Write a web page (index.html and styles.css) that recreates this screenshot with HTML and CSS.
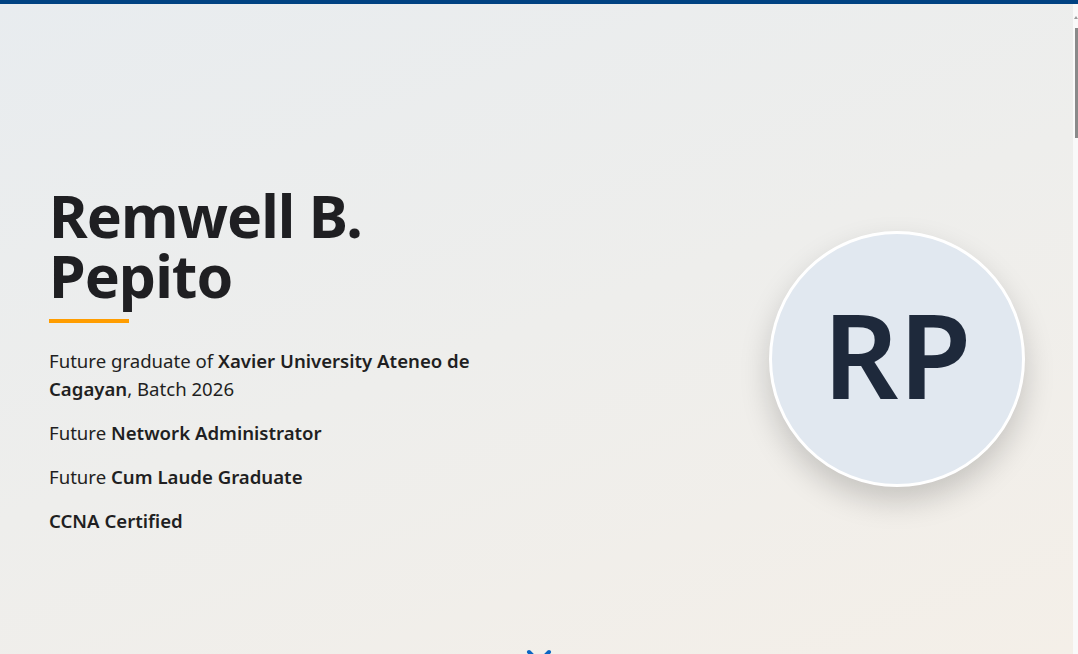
FILE: index.html
```html
<!DOCTYPE html>
<html lang="en">
<head>
<meta charset="utf-8">
<title>Remwell B. Pepito</title>
<link rel="stylesheet" href="styles.css">
</head>
<body>
<div class="progress-bar"></div>
<div class="scroll-track" aria-hidden="true"><span class="scroll-arrow"></span><span class="scroll-thumb"></span></div>
<main>
  <section class="hero">
    <div class="hero-inner">
      <div class="hero-text">
        <h1 class="hero-name">Remwell B. Pepito</h1>
        <div class="accent-line"></div>
        <p class="hero-line">Future graduate of <strong>Xavier University Ateneo de Cagayan</strong>, Batch 2026</p>
        <p class="hero-line">Future <strong>Network Administrator</strong></p>
        <p class="hero-line">Future <strong>Cum Laude Graduate</strong></p>
        <p class="hero-line"><strong>CCNA Certified</strong></p>
      </div>
      <div class="avatar"><span class="avatar-initials">RP</span></div>
    </div>
    <a class="scroll-down" href="#about" aria-label="Scroll down">
      <svg width="30" height="20" viewBox="0 0 30 20" fill="none" stroke="currentColor" stroke-width="4" stroke-linecap="round" stroke-linejoin="round"><path d="M5 4 L15 14 L25 4"/></svg>
    </a>
  </section>
  <section class="section" id="about">
    <h2 class="section-title">About Me</h2>
    <p class="section-text">An aspiring network administrator studying at Xavier University Ateneo de Cagayan.</p>
  </section>
  <section class="section">
    <h2 class="section-title">Skills</h2>
  </section>
  <section class="section">
    <h2 class="section-title">Projects</h2>
  </section>
  <section class="section">
    <h2 class="section-title">Contact</h2>
  </section>
</main>
</body>
</html>
```
FILE: styles.css
```css
html {
  height: 100%;
  overflow: hidden;
}
body {
  margin: 0;
  height: 100%;
  overflow-y: auto;
  font-family: "Noto Sans", "Open Sans", sans-serif;
  color: #1f1f22;
  background: #f0efec;
}
body::-webkit-scrollbar {
  width: 0;
}
.progress-bar {
  position: fixed;
  top: 0;
  left: 0;
  right: 0;
  height: 4px;
  background: #004282;
  z-index: 10;
}
.scroll-track {
  position: fixed;
  top: 4px;
  right: 0;
  bottom: 0;
  width: 5px;
  background: #f9f9f9;
  z-index: 9;
}
.scroll-arrow {
  position: absolute;
  top: 12px;
  left: 1px;
  width: 0;
  height: 0;
  border-left: 2px solid transparent;
  border-right: 2px solid transparent;
  border-bottom: 3px solid #9a9a9a;
}
.scroll-thumb {
  position: absolute;
  top: 24px;
  left: 2px;
  width: 3px;
  height: 110px;
  background: #8a8a8a;
}
.hero {
  position: relative;
  min-height: 100vh;
  box-sizing: border-box;
  padding: 64px 53px 0 48px;
  display: flex;
  align-items: center;
  background: linear-gradient(160deg, #e8ecef 0%, #eeeeec 50%, #f4efe8 100%);
}
.hero-inner {
  flex: 1;
  display: flex;
  justify-content: space-between;
  align-items: center;
}
.hero-text {
  max-width: 460px;
  padding-top: 18px;
}
.hero-name {
  margin: 0 0 0 1px;
  font-size: 59px;
  line-height: 60px;
  font-weight: 700;
  letter-spacing: -1px;
  color: #1f1f22;
}
.accent-line {
  width: 80px;
  height: 4px;
  background: #ff9d00;
  margin: 14px 0 24px 1px;
}
.hero-line {
  margin: 0 0 16px 1px;
  font-size: 18.6px;
  line-height: 28px;
}
.hero-line strong {
  font-weight: 600;
}
.avatar {
  width: 250px;
  height: 250px;
  border-radius: 50%;
  border: 3px solid #ffffff;
  background: #e1e8f0;
  display: flex;
  align-items: center;
  justify-content: center;
  box-shadow: 0 14px 30px rgba(0, 0, 0, 0.18);
}
.avatar-initials {
  font-size: 118px;
  font-weight: 600;
  color: #1e293b;
  line-height: 1;
  margin-top: -10px;
}
.scroll-down {
  position: absolute;
  left: 50%;
  bottom: -14px;
  transform: translateX(-50%);
  color: #0b66c3;
  display: block;
  line-height: 0;
}
.section {
  min-height: 800px;
  padding: 80px 48px;
  box-sizing: border-box;
}
.section-title {
  margin: 0 0 16px;
  font-size: 36px;
}
.section-text {
  font-size: 18px;
}
```
